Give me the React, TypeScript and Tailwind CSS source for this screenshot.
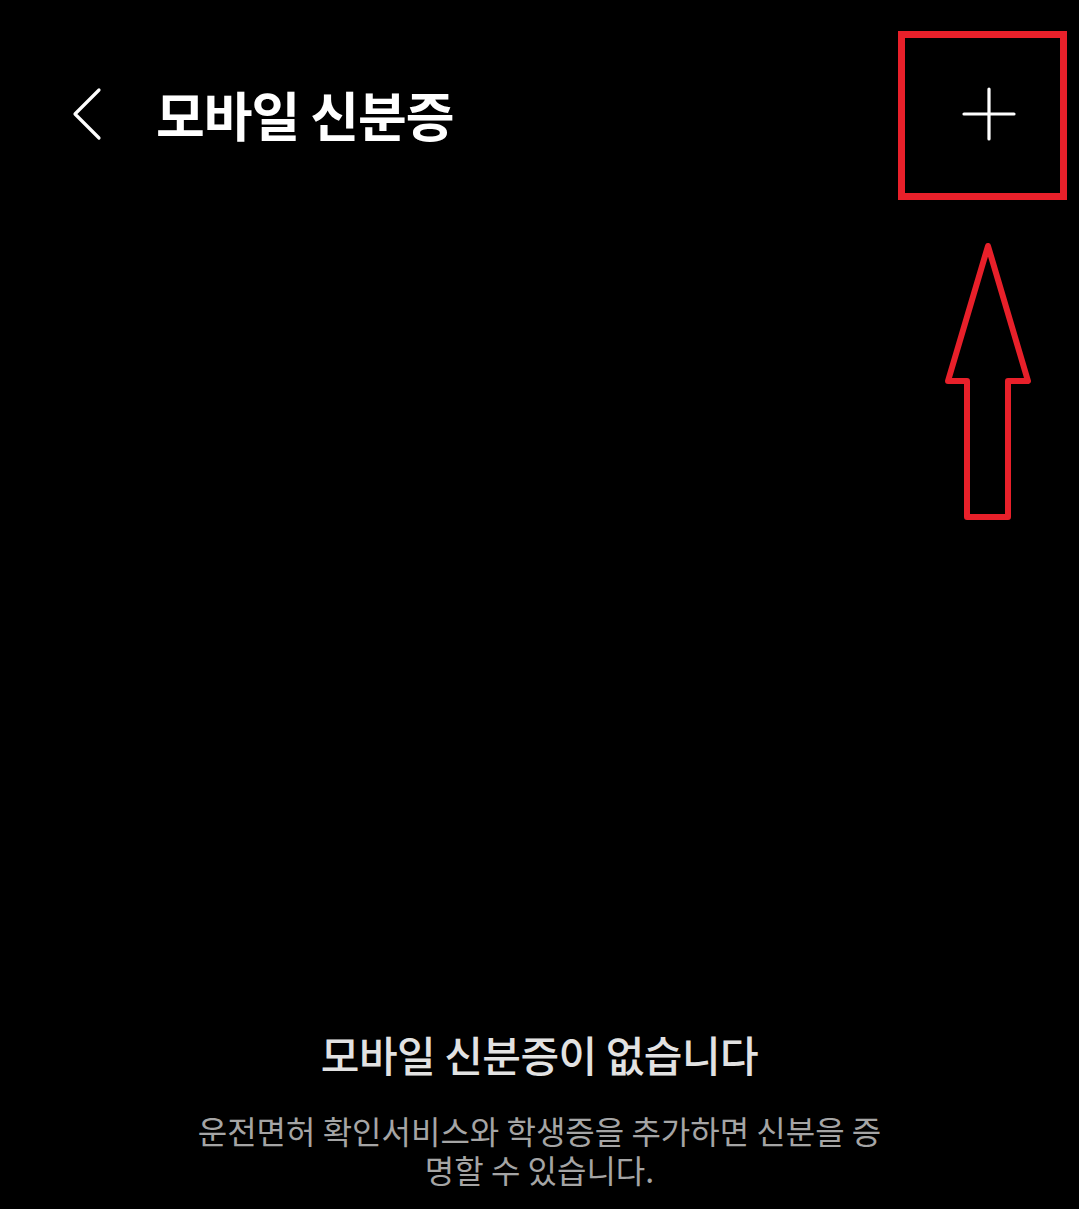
import React from "react";

export default function App() {
  return (
    <div
      className="relative flex min-h-[1209px] w-full flex-col bg-black text-white"
      style={{ fontFamily: '"Noto Sans CJK KR", "Noto Sans", sans-serif' }}
    >
      <header className="flex h-[230px] items-start">
        <div className="flex h-[230px] w-full items-start pt-[84px]">
          <button className="ml-[70px] flex h-[60px] w-[34px] items-center justify-center">
            <svg width="34" height="56" viewBox="0 0 34 56" fill="none">
              <path d="M29 4 L5 28 L29 52" stroke="#ffffff" strokeWidth="3.2" strokeLinecap="round" strokeLinejoin="round" />
            </svg>
          </button>
          <h1 className="ml-[52px] whitespace-nowrap text-[53px] font-bold leading-[60px] tracking-[-1px] text-white">모바일 신분증</h1>
          <div className="flex-1" />
          <button className="mr-[62px] flex h-[60px] w-[56px] items-center justify-center">
            <svg width="56" height="56" viewBox="0 0 56 56" fill="none">
              <path d="M28 3 V53 M3 28 H53" stroke="#ffffff" strokeWidth="3.2" strokeLinecap="round" />
            </svg>
          </button>
        </div>
      </header>

      <div className="flex-1" />

      <section className="flex flex-col items-center pb-[21px] text-center">
        <h2 className="whitespace-nowrap text-[42px] font-medium leading-[52px] tracking-[-0.5px] text-[#e2e2e2]">모바일 신분증이 없습니다</h2>
        <div className="mt-[31px] flex flex-col items-center gap-[1px] text-[32px] leading-[38px] text-[#a5a5a5]">
          <p className="whitespace-nowrap">운전면허 확인서비스와 학생증을 추가하면 신분을 증</p>
          <p className="whitespace-nowrap">명할 수 있습니다.</p>
        </div>
      </section>

      <svg
        className="pointer-events-none absolute left-0 top-0"
        width="1079"
        height="1209"
        viewBox="0 0 1079 1209"
        fill="none"
      >
        <rect x="901.5" y="34.5" width="162" height="162" stroke="#e8202a" strokeWidth="7" />
        <path
          d="M988 246 L1028 381 L1008 381 L1008 517 L967 517 L967 381 L948 381 Z"
          stroke="#e8202a"
          strokeWidth="6"
          strokeLinejoin="round"
        />
      </svg>
    </div>
  );
}
